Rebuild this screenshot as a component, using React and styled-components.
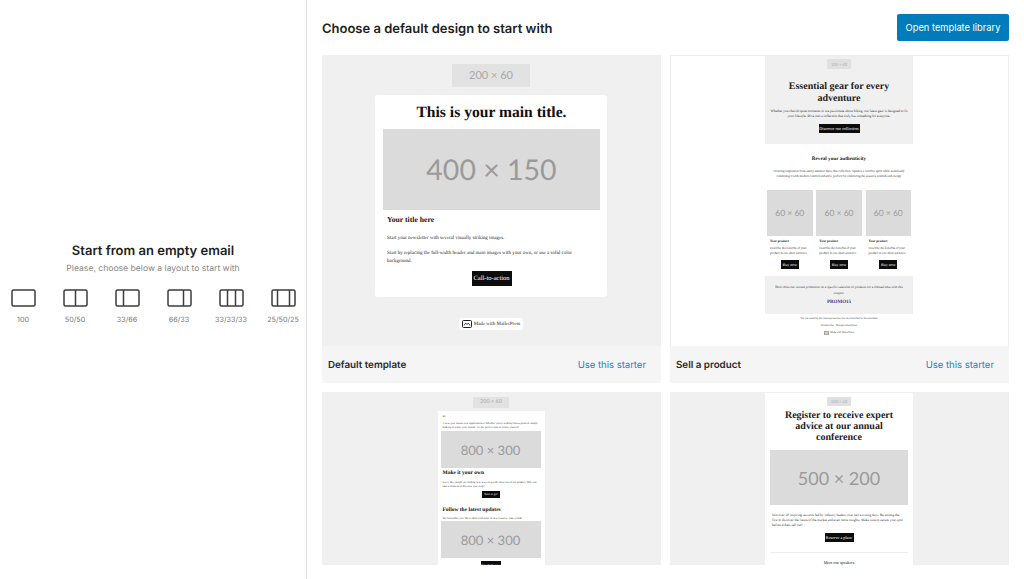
import styled, { createGlobalStyle } from "styled-components"

const GlobalStyle = createGlobalStyle`
  html, body {
    margin: 0;
    padding: 0;
    background: #fff;
    overflow: hidden;
    text-rendering: geometricPrecision;
  }
  * {
    box-sizing: border-box;
  }
`

const Page = styled.div`
  display: flex;
  width: 1024px;
  height: 579px;
  font-family: Inter, "Liberation Sans", sans-serif;
  color: #1e1e1e;
`

const Sidebar = styled.aside`
  width: 307px;
  flex-shrink: 0;
  border-right: 1px solid #e4e4e4;
  padding-top: 243px;
  text-align: center;
`

const SideTitle = styled.h2`
  margin: 0;
  font-size: 13px;
  line-height: 16px;
  font-weight: 600;
`

const SideText = styled.p`
  margin: 4px 0 0;
  font-size: 8.6px;
  line-height: 12px;
  color: #8a8a8a;
`

const LayoutRow = styled.div`
  display: flex;
  margin: 14px 0 0 -3px;
`

const LayoutItem = styled.div`
  width: 52px;
  flex-shrink: 0;
  display: flex;
  flex-direction: column;
  align-items: center;
  gap: 8px;
  font-size: 7.2px;
  line-height: 10px;
  color: #777;
`

const Main = styled.main`
  flex: 1;
  padding: 0 15px;
`

const TopBar = styled.header`
  height: 55px;
  display: flex;
  align-items: center;
  justify-content: space-between;
`

const PageTitle = styled.h1`
  margin: 2px 0 0;
  font-size: 13px;
  font-weight: 600;
  line-height: 16px;
`

const PrimaryButton = styled.button`
  width: 112px;
  height: 27px;
  border: 0;
  border-radius: 2px;
  background: #007cba;
  color: #fff;
  font-family: inherit;
  font-size: 9.3px;
  padding: 0;
`

const Grid = styled.section`
  display: grid;
  grid-template-columns: 339px 339px;
  grid-auto-rows: max-content;
  gap: 9px;
  height: 510px;
  overflow: hidden;
`

const Card = styled.article`
  display: flex;
  flex-direction: column;
  height: 328px;
`

const Preview = styled.div`
  height: 291px;
  flex-shrink: 0;
  overflow: hidden;
  background: ${(p) => (p.$plain ? "#fff" : "#f0f0f0")};
  border: ${(p) => (p.$plain ? "1px solid #eee" : "0")};
  border-bottom: 0;
  padding-right: 1px;
  display: flex;
  flex-direction: column;
  align-items: center;
  font-family: "Liberation Serif", "Times New Roman", serif;
  color: #111;
`

const CardFooter = styled.footer`
  height: 37px;
  background: #f5f5f5;
  display: flex;
  align-items: center;
  justify-content: space-between;
  padding: 2px 15px 0 6px;
  font-size: 9.5px;
`

const TemplateName = styled.span`
  font-size: 9.8px;
  font-weight: 600;
  color: #2a2a2a;
`

const UseLink = styled.a`
  color: #1585cc;
`

const Placeholder = styled.div`
  width: ${(p) => p.$w}px;
  height: ${(p) => p.$h}px;
  flex-shrink: 0;
  margin-top: ${(p) => p.$top || 0}px;
  background: ${(p) => p.$bg || "#dbdbdb"};
  color: ${(p) => p.$color || "#9a9a9a"};
  font-family: Lato, "Open Sans", sans-serif;
  font-size: ${(p) => p.$size}px;
  display: flex;
  align-items: center;
  justify-content: center;
`

const Email = styled.div`
  width: ${(p) => p.$w}px;
  flex-shrink: 0;
  margin-top: ${(p) => p.$top || 0}px;
  background: #fff;
  border-radius: ${(p) => p.$radius || 0}px;
  padding: ${(p) => p.$pad || "0"};
  display: flex;
  flex-direction: column;
  align-items: ${(p) => (p.$center ? "center" : "stretch")};
`

const Heading = styled.div`
  font-weight: 700;
  font-size: ${(p) => p.$size}px;
  line-height: ${(p) => p.$line}px;
  margin: ${(p) => p.$margin || "0"};
  text-align: ${(p) => p.$align || "left"};
  color: ${(p) => p.$color || "#111"};
`

const Copy = styled.p`
  font-size: ${(p) => p.$size}px;
  line-height: ${(p) => p.$line}px;
  margin: ${(p) => p.$margin || "0"};
  max-width: ${(p) => p.$max || "none"};
  text-align: ${(p) => p.$align || "left"};
  color: #222;
`

const Cta = styled.div`
  align-self: center;
  width: ${(p) => p.$w}px;
  height: ${(p) => p.$h}px;
  flex-shrink: 0;
  margin-top: ${(p) => p.$top || 0}px;
  margin-bottom: ${(p) => p.$bottom || 0}px;
  background: #0c0c0c;
  color: #fff;
  font-size: ${(p) => p.$size}px;
  display: flex;
  align-items: center;
  justify-content: center;
  white-space: nowrap;
`

const Badge = styled.div`
  display: flex;
  align-items: center;
  justify-content: center;
  gap: 2px;
  width: 64px;
  height: 12px;
  margin-top: 21px;
  background: #fff;
  border-radius: 3px;
  font-size: 5px;
  color: #222;
`

const Hero = styled.div`
  width: 148px;
  height: 88px;
  flex-shrink: 0;
  background: #f0f0f0;
  display: flex;
  flex-direction: column;
  align-items: center;
  padding-top: 3px;
`

const Columns = styled.div`
  width: 144px;
  display: grid;
  grid-template-columns: repeat(3, 45.5px);
  justify-content: space-between;
  margin-top: 11px;
`

const Column = styled.div`
  display: flex;
  flex-direction: column;
`

const Promo = styled.div`
  width: 148px;
  height: 38px;
  margin-top: 7px;
  flex-shrink: 0;
  background: #f0f0f0;
  padding-top: 8px;
`

const FootRow = styled.div`
  display: flex;
  align-items: center;
  justify-content: center;
  gap: 1.5px;
  margin-top: 3px;
  font-size: 2.55px;
  line-height: 4px;
  color: #333;
`

const Rule = styled.hr`
  width: 138px;
  align-self: center;
  border: 0;
  border-top: 1px solid #eee;
  margin: 10px 0 0;
`

function LayoutIcon({ dividers }) {
  return (
    <svg width="25" height="18" viewBox="0 0 25 18" fill="none" stroke="#3d3d3d" strokeWidth="1.5">
      <rect x="1" y="1" width="23" height="16" rx="1.5" />
      {dividers.map((x) => (
        <line key={x} x1={x} y1="1" x2={x} y2="17" />
      ))}
    </svg>
  )
}

function MailIcon({ size }) {
  return (
    <svg width={size} height={size * 0.8} viewBox="0 0 10 8" fill="none" stroke="#222" strokeWidth="1">
      <rect x="0.5" y="0.5" width="9" height="7" rx="1" />
      <path d="M2 5.5 L3.6 3 L5 4.6 L6.4 3 L8 5.5" strokeWidth="0.8" />
    </svg>
  )
}

const layouts = [
  { label: "100", dividers: [] },
  { label: "50/50", dividers: [12.5] },
  { label: "33/66", dividers: [8.5] },
  { label: "66/33", dividers: [16.5] },
  { label: "33/33/33", dividers: [8.5, 16.5] },
  { label: "25/50/25", dividers: [6.5, 18.5] },
]

function Footer({ name }) {
  return (
    <CardFooter>
      <TemplateName>{name}</TemplateName>
      <UseLink>Use this starter</UseLink>
    </CardFooter>
  )
}

function DefaultPreview() {
  return (
    <Preview>
      <Placeholder $w={78} $h={23} $top={9} $size={11} $bg="#e2e2e2" $color="#a8a8a8">200 × 60</Placeholder>
      <Email $w={232} $top={8} $radius={3} $pad="9px 7px 0 8px">
        <Heading $size={15.6} $line={18} $align="center">This is your main title.</Heading>
        <Placeholder $w={217} $h={81} $top={7} $size={28.5}>400 × 150</Placeholder>
        <Heading $size={7.7} $line={10} $margin="5px 0 0 4px">Your title here</Heading>
        <Copy $size={5} $line={8} $margin="9.5px 0 0 4px">Start your newsletter with several visually striking images.</Copy>
        <Copy $size={5} $line={8} $max="195px" $margin="7px 0 0 4px">
          Start by replacing the full-width header and main images with your own, or use a solid color background.
        </Copy>
        <Cta $w={40} $h={15} $top={5.5} $bottom={11} $size={6.5}>Call-to-action</Cta>
      </Email>
      <Badge><MailIcon size={10} />Made with MailerPress</Badge>
    </Preview>
  )
}

function ProductPreview() {
  return (
    <Preview $plain>
      <Hero>
        <Placeholder $w={24} $h={10} $size={4} $bg="#e0e0e0" $color="#aaa">100 × 40</Placeholder>
        <Heading $size={10} $line={12} $align="center" $margin="12px 0 0" $color="#222">
          Essential gear for every<br />adventure
        </Heading>
        <Copy $size={3.45} $line={5.2} $align="center" $margin="4px 4px 0">
          Whether you cherish quiet moments or are passionate about hiking, our latest gear is designed to fit your lifestyle. Dive into a collection that truly has something for everyone.
        </Copy>
        <Cta $w={41} $h={9} $top={5} $size={4.2}>Discover our collection</Cta>
      </Hero>
      <Heading $size={5.2} $line={6} $align="center" $margin="12px 0 0">Reveal your authenticity</Heading>
      <Copy $size={3.15} $line={4.8} $align="center" $max="138px" $margin="7px 0 0">
        Drawing inspiration from sunny summer days, this collection captures a carefree spirit while seamlessly combining it with modern comfort and style, perfect for embracing the season's warmth and energy.
      </Copy>
      <Columns>
        {[0, 1, 2].map((i) => (
          <Column key={i}>
            <Placeholder $w={45.5} $h={46} $size={8.5}>60 × 60</Placeholder>
            <Heading $size={3.3} $line={5} $margin="3px 0 0 3px">Your product</Heading>
            <Copy $size={3.15} $line={4.8} $margin="2.5px 0 0 3px">Describe the benefits of your product in one short sentence.</Copy>
            <Cta $w={18} $h={9} $top={4} $size={4}>Buy now</Cta>
          </Column>
        ))}
      </Columns>
      <Promo>
        <Copy $size={3.35} $line={6} $align="center" $margin="0 6px">
          Don't miss our current promotion on a specific selection of products for a limited time with this coupon:
        </Copy>
        <Heading $size={5} $line={6} $align="center" $margin="4px 0 0" $color="#3d3a9e">PROMO15</Heading>
      </Promo>
      <FootRow>You are receiving this message because you are subscribed to the newsletter</FootRow>
      <FootRow>Unsubscribe · Manage subscription</FootRow>
      <FootRow><MailIcon size={5} />Made with MailerPress</FootRow>
    </Preview>
  )
}

function UpdatesPreview() {
  return (
    <Preview>
      <Placeholder $w={36} $h={10.5} $top={5} $size={5.5} $bg="#e2e2e2" $color="#aaa">200 × 60</Placeholder>
      <Email $w={107} $top={3.5} $pad="3px 3px 0">
        <Copy $size={2.8} $line={4} $margin="1px 0 0 2px">Hi,</Copy>
        <Copy $size={2.8} $line={3.8} $margin="3px 2px 0 2px">
          A new year means new opportunities! Whether you're seeking fitness goals or simply looking to refine your routine, it's the perfect time to renew yourself.
        </Copy>
        <Placeholder $w={100} $h={37} $top={1.5} $size={13}>800 × 300</Placeholder>
        <Heading $size={5.5} $line={7} $margin="2px 0 0 2px">Make it your own</Heading>
        <Copy $size={2.8} $line={3.8} $margin="4px 2px 0 2px">
          Every day, people are finding new ways to get the most out of our product. Why not take a moment to this new year soup?
        </Copy>
        <Cta $w={18} $h={7} $top={2} $size={3}>Start to go!</Cta>
        <Heading $size={5.5} $line={7} $margin="9px 0 0 2px">Follow the latest updates</Heading>
        <Copy $size={2.8} $line={3.8} $margin="3px 2px 0 2px">We listened to you. We've delivered some of new features. Take a look!</Copy>
        <Placeholder $w={100} $h={37} $top={1} $size={13}>800 × 300</Placeholder>
        <Cta $w={20} $h={7} $top={3} $size={3}>See all the news</Cta>
      </Email>
    </Preview>
  )
}

function EventPreview() {
  return (
    <Preview>
      <Email $w={148} $top={1} $center>
        <Placeholder $w={24} $h={9} $top={4} $size={4} $bg="#e0e0e0" $color="#aaa">100 × 40</Placeholder>
        <Heading $size={10} $line={11} $align="center" $margin="4px 0 0" $color="#222">
          Register to receive expert<br />advice at our annual<br />conference
        </Heading>
        <Placeholder $w={138} $h={55} $top={7} $size={18}>500 × 200</Placeholder>
        <Copy $size={3.45} $line={5.2} $margin="8px 8.5px 0 7px">
          Join over 20 inspiring sessions led by industry leaders over two exciting days. Be among the first to discover the future of the market and even more insights. Make sure to secure your spot before tickets sell out!
        </Copy>
        <Cta $w={29} $h={9} $top={4} $size={4.2}>Reserve a place</Cta>
        <Rule />
        <Copy $size={4.2} $line={6} $align="center" $margin="7px 0 0">Meet our speakers</Copy>
      </Email>
    </Preview>
  )
}

export default function App() {
  return (
    <Page>
      <GlobalStyle />
      <Sidebar>
        <SideTitle>Start from an empty email</SideTitle>
        <SideText>Please, choose below a layout to start with</SideText>
        <LayoutRow>
          {layouts.map((l) => (
            <LayoutItem key={l.label}>
              <LayoutIcon dividers={l.dividers} />
              {l.label}
            </LayoutItem>
          ))}
        </LayoutRow>
      </Sidebar>
      <Main>
        <TopBar>
          <PageTitle>Choose a default design to start with</PageTitle>
          <PrimaryButton>Open template library</PrimaryButton>
        </TopBar>
        <Grid>
          <Card>
            <DefaultPreview />
            <Footer name="Default template" />
          </Card>
          <Card>
            <ProductPreview />
            <Footer name="Sell a product" />
          </Card>
          <Card>
            <UpdatesPreview />
          </Card>
          <Card>
            <EventPreview />
          </Card>
        </Grid>
      </Main>
    </Page>
  )
}
